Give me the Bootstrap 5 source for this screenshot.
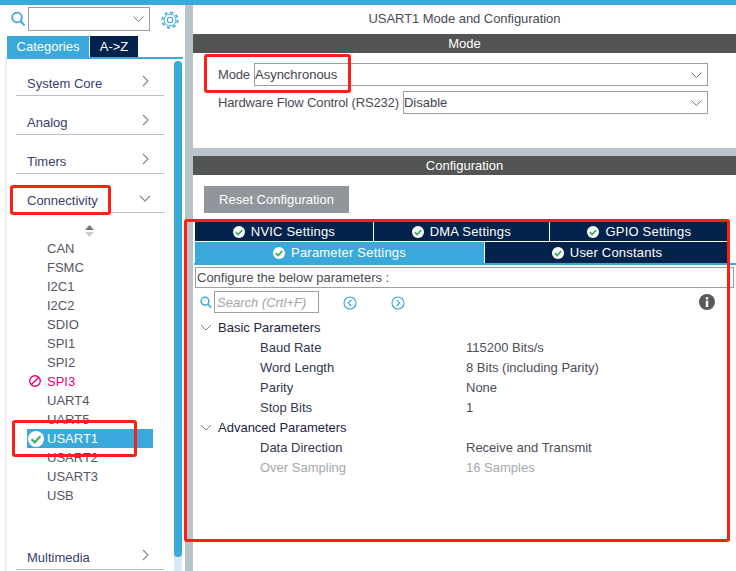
<!DOCTYPE html>
<html lang="en"><head><meta charset="utf-8"><title>USART1 Mode and Configuration</title>
<link href="https://cdn.jsdelivr.net/npm/bootstrap@5.3.0/dist/css/bootstrap.min.css" rel="stylesheet">
<style>
html,body{width:736px;height:571px;overflow:hidden;margin:0}
body{position:relative;background:#fff;font-family:"Liberation Sans",Arial,sans-serif;font-size:13px;color:#4a4a55}
.topline{height:5px;background:#39a9dc}
.shell{height:566px}
.leftp{width:185px;position:relative;overflow:hidden;flex:none}
.gutter{width:8px;background:#b9c4ca;flex:none}
.rightp{flex:1;min-width:0;overflow:hidden}
.findrow{height:31px;padding:2px 0 0 11px}
.form-select.combo{width:122px;height:24px;margin:0 11px 0 2px}
.form-select.combo,.form-select.selx{border-radius:0;border:1px solid #9a9fa3;box-shadow:none;padding:0;font-size:13px;color:#43434d;background-size:11px 6px;background-repeat:no-repeat;background-position:right 5px center;background-image:url("data:image/svg+xml,%3Csvg xmlns='http://www.w3.org/2000/svg' viewBox='0 0 11 6'%3E%3Cpath d='M.5.5l5 5 5-5' fill='none' stroke='%23777' stroke-width='1'/%3E%3C/svg%3E")}
.cattabs{padding-left:7px;height:21px}
.cattab{height:21px;line-height:21px;text-align:center;color:#fff;font-size:13px}
.tabon{width:82px;background:#39a9dc;margin-right:1px}
.taboff{width:48px;background:#04234c}
.catline{height:2px;background:#39a9dc;margin-left:5px;width:178px}
.catbody{position:relative;height:514px;margin-top:-2px;border-left:2px solid #eceeef;margin-left:5px;padding:0 0 0 9px}
.catrow{width:148px;height:39px;border-bottom:1px solid #b9c2c8;padding:19px 15px 0 11px;color:#37406e;font-size:13px;line-height:16px;display:flex;justify-content:space-between}
.catrow svg{margin-top:-1px}
.catrow svg.chevd{margin:2px -2px 0 0}
.sorter{height:26px;margin-left:-9px;padding:12px 0 0 78px;line-height:0}
.perlist{margin-left:-9px;padding-left:20px;height:292px}
.list-group-item.peritem{height:19px;line-height:19px;padding:0 0 0 20px;width:126px;font-size:13px;color:#55555f;position:relative;border:0;background:none;border-radius:0}
.list-group-item.peritem.chosen{background:#39a9dc;color:#fff}
.list-group-item.peritem.warned{color:#e6007e}
.peritem svg{position:absolute;left:1px;top:2px}
.vbar{position:absolute;left:174px;top:56px;width:8px;height:510px;background:#d8e8f5;border-radius:4px 4px 0 0}
.vthumb{height:496px;background:#39a9dc;border-radius:4px}
.ptitle{height:29px;line-height:28px;text-align:center;font-size:13px;letter-spacing:-.05px}
.dbar{height:19px;line-height:19px;background:#535554;color:#fff;text-align:center;font-size:13px}
.modearea{height:95px;padding:10px 28px 0 25px}
.lab{font-size:13px;line-height:23px;margin-right:4px;white-space:nowrap;letter-spacing:-.14px}
.selx{height:23px}
.formline{margin-bottom:5px;display:flex}
.sep{height:8px;background:#b9c4ca}
.resetbtn.btn{display:block;margin:11px 0 9px 11px;width:145px;height:27px;padding:0;line-height:27px;border:0;border-radius:0;background:#90969b;color:#fff;font-size:13px}
.ttabs{padding-left:2px;width:536px;gap:1px}
.ttab{height:19px;line-height:19px;background:#04234c;color:#fff;text-align:center;font-size:13px;letter-spacing:.2px;display:flex;align-items:center;justify-content:center;gap:6px}
.ttabs.two{margin-top:1px}
.ttabs.two .ttab{height:21px}
.ttab.active{background:#39a9dc;width:289px}
.tline{height:2px;background:#39a9dc;margin-left:1px}
.hintbox{height:21px;line-height:19px;margin:2px 2px 0 2px;border:1px solid #9a9fa3;padding-left:1px;font-size:13px}
.srow{height:30px;padding:3px 0 0 7px;display:flex;align-items:flex-start}
.srch.form-control{width:105px;height:22px;padding:0 2px;border:1px solid #9a9fa3;border-radius:0;font-size:13px;font-style:italic;margin:0 0 0 2px;box-shadow:none}
.srch::placeholder{color:#a3a3a8;opacity:1}
.navc{margin-top:5px}
.navl{margin-left:24px}
.navr{margin-left:34px}
.infoi{margin:3px 21px 0 auto}
.tree{font-size:13px}
.trow{height:20px;line-height:20px;display:flex;color:#4d4d58}
.trow.hdr{color:#1d2540;padding-left:7px}
.trow.hdr svg{margin:6px 6px 0 0}
.kname{width:273px;padding-left:67px;flex:none;color:#33384d}
.trow.dim,.trow.dim .kname{color:#a6a8ab}
.mark-red{position:absolute;border:3px solid #fb2011;border-radius:3px;pointer-events:none;z-index:5}
.m1{left:10px;top:185px;width:101px;height:30px}
.m2{left:12px;top:420px;width:125px;height:37px}
.m3{left:204px;top:54px;width:147px;height:39px}
.m4{left:184px;top:219px;width:546px;height:323px}
</style></head>
<body>
<div class="topline"></div>
<div class="shell d-flex">
 <aside class="leftp">
  <div class="findrow d-flex align-items-start">
   <svg width="15" height="16" viewBox="0 0 15 16" class="mt-1"><circle cx="6" cy="6.5" r="4.8" fill="none" stroke="#39a9dc" stroke-width="1.8"/><path d="M9.5 10l4 4.4" stroke="#39a9dc" stroke-width="2"/></svg>
   <select class="form-select combo" aria-label="Search"></select>
   <svg width="18" height="18" viewBox="0 0 18 18" class="mt-1"><g fill="none" stroke="#39a9dc"><circle cx="9" cy="9" r="7.7" stroke-width="1.8" stroke-dasharray="3 3.05"/><circle cx="9" cy="9" r="6" stroke-width="1"/><circle cx="9" cy="9" r="2.7" stroke-width="1.1"/></g></svg>
  </div>
  <div class="cattabs d-flex"><div class="cattab tabon">Categories</div><div class="cattab taboff">A-&gt;Z</div></div>
  <div class="catline"></div>
  <div class="catbody">
   <div class="catrow"><span>System Core</span><svg width="7" height="12" viewBox="0 0 7 12"><path d="M1 1l5 5-5 5" fill="none" stroke="#80858a" stroke-width="1.1"/></svg></div>
   <div class="catrow"><span>Analog</span><svg width="7" height="12" viewBox="0 0 7 12"><path d="M1 1l5 5-5 5" fill="none" stroke="#80858a" stroke-width="1.1"/></svg></div>
   <div class="catrow"><span>Timers</span><svg width="7" height="12" viewBox="0 0 7 12"><path d="M1 1l5 5-5 5" fill="none" stroke="#80858a" stroke-width="1.1"/></svg></div>
   <div class="catrow"><span>Connectivity</span><svg width="12" height="7" viewBox="0 0 12 7" class="chevd"><path d="M1 1l5 5 5-5" fill="none" stroke="#80858a" stroke-width="1.1"/></svg></div>
   <div class="sorter"><svg width="9" height="12" viewBox="0 0 9 12"><path d="M4.5 0l4.5 5H0z" fill="#777"/><path d="M4.5 12l4.5-5H0z" fill="#ccc"/></svg></div>
   <div class="perlist list-group">
    <div class="peritem list-group-item">CAN</div>
    <div class="peritem list-group-item">FSMC</div>
    <div class="peritem list-group-item">I2C1</div>
    <div class="peritem list-group-item">I2C2</div>
    <div class="peritem list-group-item">SDIO</div>
    <div class="peritem list-group-item">SPI1</div>
    <div class="peritem list-group-item">SPI2</div>
    <div class="peritem list-group-item warned"><svg width="14" height="14" viewBox="0 0 14 14"><circle cx="7" cy="7" r="5.3" fill="none" stroke="#e6007e" stroke-width="1.4"/><path d="M3.4 10.6l7.2-7.2" stroke="#e6007e" stroke-width="1.4"/></svg>SPI3</div>
    <div class="peritem list-group-item">UART4</div>
    <div class="peritem list-group-item">UART5</div>
    <div class="peritem list-group-item chosen"><svg width="16" height="16" viewBox="0 0 16 16"><circle cx="8" cy="8" r="8" fill="#fff"/><path d="M3.6 8.2l3.1 3.1 5.7-6" fill="none" stroke="#3cae6a" stroke-width="2.2"/></svg>USART1</div>
    <div class="peritem list-group-item">USART2</div>
    <div class="peritem list-group-item">USART3</div>
    <div class="peritem list-group-item">USB</div>
   </div>
   <div class="catrow"><span>Multimedia</span><svg width="7" height="12" viewBox="0 0 7 12"><path d="M1 1l5 5-5 5" fill="none" stroke="#80858a" stroke-width="1.1"/></svg></div>
  </div>
  <div class="vbar"><div class="vthumb"></div></div>
 </aside>
 <div class="gutter"></div>
 <main class="rightp">
  <div class="ptitle">USART1 Mode and Configuration</div>
  <div class="dbar">Mode</div>
  <div class="modearea">
   <div class="formline"><span class="lab">Mode</span><select class="form-select selx" aria-label="Mode"><option>Asynchronous</option></select></div>
   <div class="formline"><span class="lab">Hardware Flow Control (RS232)</span><select class="form-select selx" aria-label="Hardware Flow Control"><option>Disable</option></select></div>
  </div>
  <div class="sep"></div>
  <div class="dbar">Configuration</div>
  <button type="button" class="btn resetbtn">Reset Configuration</button>
  <div class="ttabs d-flex">
   <div class="ttab flex-fill"><svg width="12" height="12" viewBox="0 0 12 12"><circle cx="6" cy="6" r="6" fill="#fff"/><path d="M2.8 6.2l2.3 2.3 4.1-4.4" fill="none" stroke="#3cae6a" stroke-width="1.8"/></svg>NVIC Settings</div>
   <div class="ttab flex-fill"><svg width="12" height="12" viewBox="0 0 12 12"><circle cx="6" cy="6" r="6" fill="#fff"/><path d="M2.8 6.2l2.3 2.3 4.1-4.4" fill="none" stroke="#3cae6a" stroke-width="1.8"/></svg>DMA Settings</div>
   <div class="ttab flex-fill"><svg width="12" height="12" viewBox="0 0 12 12"><circle cx="6" cy="6" r="6" fill="#fff"/><path d="M2.8 6.2l2.3 2.3 4.1-4.4" fill="none" stroke="#3cae6a" stroke-width="1.8"/></svg>GPIO Settings</div>
  </div>
  <div class="ttabs two d-flex">
   <div class="ttab active"><svg width="12" height="12" viewBox="0 0 12 12"><circle cx="6" cy="6" r="6" fill="#fff"/><path d="M2.8 6.2l2.3 2.3 4.1-4.4" fill="none" stroke="#3cae6a" stroke-width="1.8"/></svg>Parameter Settings</div>
   <div class="ttab flex-fill"><svg width="12" height="12" viewBox="0 0 12 12"><circle cx="6" cy="6" r="6" fill="#fff"/><path d="M2.8 6.2l2.3 2.3 4.1-4.4" fill="none" stroke="#3cae6a" stroke-width="1.8"/></svg>User Constants</div>
  </div>
  <div class="tline"></div>
  <div class="hintbox">Configure the below parameters :</div>
  <div class="srow">
   <svg width="12" height="13" viewBox="0 0 12 13" class="navc"><circle cx="5" cy="5.2" r="3.9" fill="none" stroke="#39a9dc" stroke-width="1.5"/><path d="M8 8.2l3.2 3.6" stroke="#39a9dc" stroke-width="1.6"/></svg>
   <input class="form-control srch" type="text" placeholder="Search (Crtl+F)" aria-label="Search">
   <svg width="14" height="14" viewBox="0 0 14 14" class="navc navl"><circle cx="7" cy="7" r="6" fill="none" stroke="#39a9dc" stroke-width="1.1"/><path d="M8.2 4L5.2 7l3 3" fill="none" stroke="#39a9dc" stroke-width="1.1"/></svg>
   <svg width="14" height="14" viewBox="0 0 14 14" class="navc navr"><circle cx="7" cy="7" r="6" fill="none" stroke="#39a9dc" stroke-width="1.1"/><path d="M5.8 4l3 3-3 3" fill="none" stroke="#39a9dc" stroke-width="1.1"/></svg>
   <svg width="16" height="16" viewBox="0 0 16 16" class="infoi"><circle cx="8" cy="8" r="8" fill="#58595b"/><rect x="6.8" y="6.6" width="2.4" height="6.4" fill="#fff"/><rect x="6.8" y="3.2" width="2.4" height="2.2" fill="#fff"/></svg>
  </div>
  <div class="tree">
   <div class="trow hdr"><svg width="12" height="7" viewBox="0 0 12 7"><path d="M1 1l5 5 5-5" fill="none" stroke="#80858a" stroke-width="1"/></svg>Basic Parameters</div>
   <div class="trow"><span class="kname">Baud Rate</span><span>115200 Bits/s</span></div>
   <div class="trow"><span class="kname">Word Length</span><span>8 Bits (including Parity)</span></div>
   <div class="trow"><span class="kname">Parity</span><span>None</span></div>
   <div class="trow"><span class="kname">Stop Bits</span><span>1</span></div>
   <div class="trow hdr"><svg width="12" height="7" viewBox="0 0 12 7"><path d="M1 1l5 5 5-5" fill="none" stroke="#80858a" stroke-width="1"/></svg>Advanced Parameters</div>
   <div class="trow"><span class="kname">Data Direction</span><span>Receive and Transmit</span></div>
   <div class="trow dim"><span class="kname">Over Sampling</span><span>16 Samples</span></div>
  </div>
 </main>
</div>
<div class="mark-red m1"></div><div class="mark-red m2"></div><div class="mark-red m3"></div><div class="mark-red m4"></div>
</body></html>
